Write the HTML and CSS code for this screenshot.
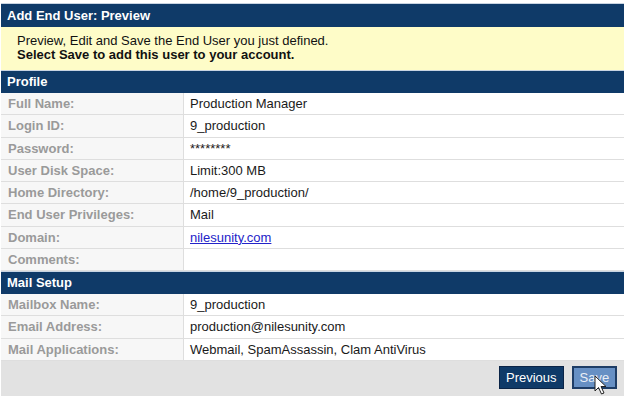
FILE: index.html
```html
<!DOCTYPE html>
<html>
<head>
<meta charset="utf-8">
<link rel="stylesheet" href="styles.css">
</head>
<body>
<div class="page">
  <div class="bar title">Add End User: Preview</div>
  <div class="note">
    <div>Preview, Edit and Save the End User you just defined.</div>
    <div class="strong">Select Save to add this user to your account.</div>
  </div>
  <div class="bar">Profile</div>
  <table class="grid">
    <tr><td class="lbl">Full Name:</td><td>Production Manager</td></tr>
    <tr><td class="lbl">Login ID:</td><td>9_production</td></tr>
    <tr><td class="lbl">Password:</td><td>********</td></tr>
    <tr><td class="lbl">User Disk Space:</td><td>Limit:300 MB</td></tr>
    <tr><td class="lbl">Home Directory:</td><td>/home/9_production/</td></tr>
    <tr><td class="lbl">End User Privileges:</td><td>Mail</td></tr>
    <tr><td class="lbl">Domain:</td><td><a href="#">nilesunity.com</a></td></tr>
    <tr><td class="lbl">Comments:</td><td></td></tr>
  </table>
  <div class="bar">Mail Setup</div>
  <table class="grid">
    <tr><td class="lbl">Mailbox Name:</td><td>9_production</td></tr>
    <tr><td class="lbl">Email Address:</td><td>production@nilesunity.com</td></tr>
    <tr><td class="lbl">Mail Applications:</td><td>Webmail, SpamAssassin, Clam AntiVirus</td></tr>
  </table>
  <div class="footer">
    <button class="btn">Previous</button>
    <span class="savewrap">
      <button class="btn light">Save</button>
      <svg class="cursor" width="14" height="20" viewBox="0 0 14 20"><path d="M1 1 L1 16 L4.5 12.5 L7.5 19 L10 18 L7 11.5 L12 11.5 Z" fill="#fff" stroke="#222" stroke-width="1"/></svg>
    </span>
    <span class="btn stub"></span>
  </div>
</div>
</body>
</html>
```
FILE: styles.css
```css
html, body {
  margin: 0;
  padding: 0;
  background: #fff;
  overflow: hidden;
}
body {
  font-family: "Liberation Sans", Arial, sans-serif;
  font-size: 13px;
  color: #222;
}
.page {
  width: 690px;
  margin: 3px 0 0 1px;
}
.bar {
  background: #0f3a68;
  color: #fff;
  font-weight: bold;
  font-size: 13px;
  height: 22px;
  line-height: 22px;
  padding-left: 6px;
  border-top: 1px solid #c8d4e2;
}
.title {
  height: 23px;
  line-height: 23px;
}
.note {
  background: #fefcc8;
  box-sizing: border-box;
  height: 43px;
  line-height: 14px;
  padding: 7px 16px 0 16px;
  color: #111;
}
.note .strong {
  font-weight: bold;
}
.grid {
  width: 100%;
  border-collapse: collapse;
}
.grid td {
  height: 21.25px;
  padding: 0 0 0 6px;
  border-bottom: 1px solid #dedede;
  font-size: 13px;
  color: #1a1a1a;
  vertical-align: middle;
}
.grid td.lbl {
  width: 175px;
  font-weight: bold;
  color: #9a9a9a;
  background: #f7f7f7;
  border-right: 1px solid #dedede;
  padding-left: 7px;
}
.grid a {
  color: #2323c8;
}
.footer {
  background: #e2e2e2;
  height: 35px;
  box-sizing: border-box;
  display: flex;
  align-items: flex-start;
  padding: 5px 0 0 498px;
  gap: 8px;
}
.btn {
  font-family: "Liberation Sans", Arial, sans-serif;
  font-size: 13px;
  color: #fff;
  background: #0f3a68;
  border: 1px solid #0a2447;
  height: 23px;
  padding: 0 6px;
  margin: 0;
  box-sizing: border-box;
}
.btn.light {
  background: #6790c4;
  border: 2px solid #1e3d66;
  color: #e9eef6;
  padding: 0 6px;
}
.btn.stub {
  display: inline-block;
  width: 40px;
}
.savewrap {
  position: relative;
  display: inline-block;
  height: 23px;
}
.cursor {
  position: absolute;
  left: 22px;
  top: 9px;
}
```
